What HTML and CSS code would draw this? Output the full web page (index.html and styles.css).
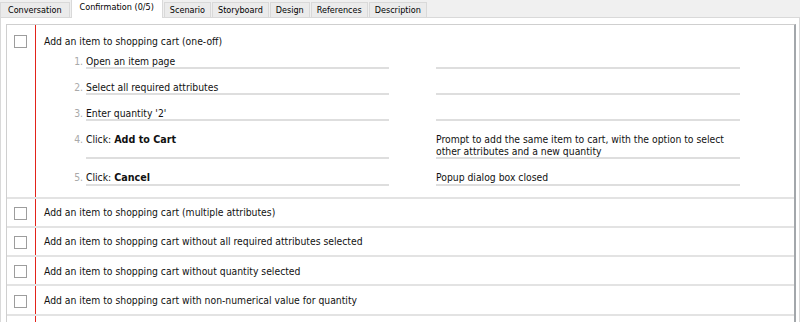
FILE: index.html
```html
<!DOCTYPE html>
<html lang="en">
<head>
  <meta charset="UTF-8" />
  <title>Story - Confirmation</title>
  <link rel="stylesheet" href="styles.css">
</head>
<body>

  <!-- tab strip -->
  <div class="tabs">
    <div class="tab first">Conversation</div>
    <div class="tab active">Confirmation (0/5)</div>
    <div class="tab">Scenario</div>
    <div class="tab">Storyboard</div>
    <div class="tab">Design</div>
    <div class="tab">References</div>
    <div class="tab">Description</div>
  </div>

  <div class="panel">
    <div class="checklist">

      <div class="row open">
        <div class="check"><span class="box"></span></div>
        <div class="body">
          <div class="title">Add an item to shopping cart (one-off)</div>
          <div class="steps">
            <div class="step">
              <span class="num">1.</span>
              <span class="action">Open an item page</span>
              <span class="result"></span>
            </div>
            <div class="step">
              <span class="num">2.</span>
              <span class="action">Select all required attributes</span>
              <span class="result"></span>
            </div>
            <div class="step">
              <span class="num">3.</span>
              <span class="action">Enter quantity '2'</span>
              <span class="result"></span>
            </div>
            <div class="step">
              <span class="num">4.</span>
              <span class="action">Click: <b>Add to Cart</b></span>
              <span class="result">Prompt to add the same item to cart, with the option to select other attributes and a new quantity</span>
            </div>
            <div class="step">
              <span class="num">5.</span>
              <span class="action">Click: <b>Cancel</b></span>
              <span class="result">Popup dialog box closed</span>
            </div>
          </div>
        </div>
      </div>

      <div class="row">
        <div class="check"><span class="box"></span></div>
        <div class="body"><div class="title">Add an item to shopping cart (multiple attributes)</div></div>
      </div>
      <div class="row">
        <div class="check"><span class="box"></span></div>
        <div class="body"><div class="title">Add an item to shopping cart without all required attributes selected</div></div>
      </div>
      <div class="row">
        <div class="check"><span class="box"></span></div>
        <div class="body"><div class="title">Add an item to shopping cart without quantity selected</div></div>
      </div>
      <div class="row">
        <div class="check"><span class="box"></span></div>
        <div class="body"><div class="title">Add an item to shopping cart with non-numerical value for quantity</div></div>
      </div>

      <!-- empty space below the last item keeps the red rule going -->
      <div class="row filler">
        <div class="check"></div>
        <div class="body"></div>
      </div>

    </div>
  </div>

</body>
</html>
```
FILE: styles.css
```css
html, body {
  overflow: hidden;
}
body {
  margin: 0;
  height: 322px;
  display: flex;
  flex-direction: column;
  background-color: #f0f0f0;
  color: #111;
  font-family: 'DejaVu Sans Condensed', 'DejaVu Sans', Tahoma, sans-serif;
  font-size: 10.3px;
}

/* TABS */
.tabs {
  display: flex;
  align-items: flex-end;
  height: 17px;
}
.tab {
  height: 14px;
  line-height: 15px;
  padding: 0 5px;
  margin-right: 1px;
  font-size: 9px;
  color: #000;
  background: #ebebeb;
  border: 1px solid #d9d9d9;
  border-bottom: none;
}
.tab.first {
  padding: 0 7px;
}
.tab.active {
  position: relative;
  z-index: 1;
  height: 18px;
  line-height: 14px;
  margin-bottom: -1px;
  padding: 0 8px;
  background: #fff;
}

/* PANEL */
.panel {
  flex: 1;
  min-height: 0;
  display: flex;
  flex-direction: column;
  background: #fff;
  border: 1px solid #d9d9d9;
  border-bottom: none;
  padding: 6px 3px 0 5px;
}
.checklist {
  flex: 1;
  display: flex;
  flex-direction: column;
  border: 1px solid #cfcfcf;
  border-right: 2px solid #a3a7ab;
  border-bottom: none;
}
.row {
  display: flex;
  flex-shrink: 0;
  border-bottom: 2px solid #e3e3e3;
}
.check {
  width: 29px;
  flex-shrink: 0;
  border-right: 1px solid #e2231a;
  padding-top: 8.3px;
  padding-left: 7px;
  box-sizing: border-box;
}
.box {
  display: block;
  width: 13px;
  height: 13px;
  box-sizing: border-box;
  border: 1px solid #9d9d9d;
  background: #fff;
}
.body {
  flex: 1;
  padding: 7.6px 0 6.73px 8px;
}
.title {
  line-height: 13px;
}

/* first item is expanded */
.row.open .check {
  padding-top: 10px;
}
.row.open .body {
  padding-top: 9.5px;
  padding-bottom: 11px;
}
.steps {
  margin-top: 7px;
}
.step {
  display: flex;
  margin-top: 12px;
  line-height: 12px;
}
.step:first-child {
  margin-top: 0;
}
.num {
  width: 42px;
  flex-shrink: 0;
  padding-right: 3px;
  box-sizing: border-box;
  text-align: right;
  color: #a9a9a9;
}
.action, .result {
  border-bottom: 2px solid #dedede;
}
.action {
  width: 303px;
  flex-shrink: 0;
}
.result {
  width: 304px;
  flex-shrink: 0;
  margin-left: 47px;
}
.action b {
  font-family: 'DejaVu Sans', Tahoma, sans-serif;
  font-size: 9.6px;
}

.row.filler {
  flex: 1 1 auto;
  min-height: 0;
  border-bottom: none;
}
```
